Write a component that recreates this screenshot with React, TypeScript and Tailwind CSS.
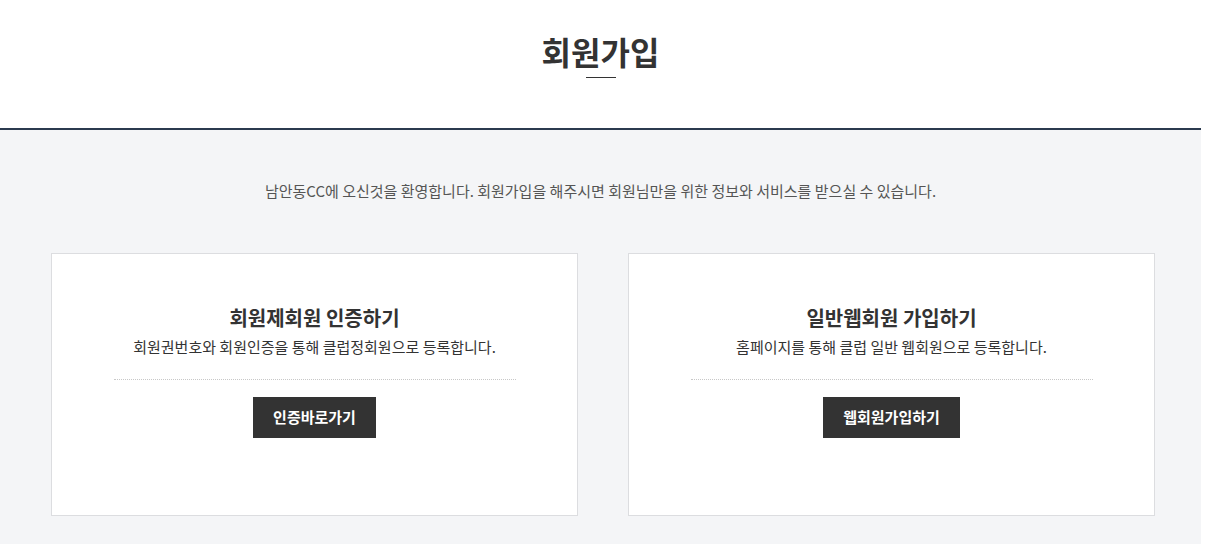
import React from 'react';

const font = { fontFamily: '"Noto Sans CJK KR", "Noto Sans", sans-serif' };

type CardProps = {
  title: string;
  desc: string;
  button: string;
};

const JoinCard: React.FC<CardProps> = ({ title, desc, button }) => {
  return (
    <div className="w-[527px] h-[263px] bg-white border border-[#dcdde0] flex flex-col items-center pt-[51px]">
      <h3 className="text-[20px] leading-[26px] font-bold text-[#333]">{title}</h3>
      <p className="mt-[6px] text-[15px] leading-[20px] text-[#333]">{desc}</p>
      <div className="mt-[22px] w-[402px] border-t border-dotted border-[#c8c8c8]" />
      <a
        href="#"
        className="mt-[17px] h-[41px] px-[20px] flex items-center bg-[#333333] text-white text-[15px] font-bold"
      >
        {button}
      </a>
    </div>
  );
};

export default function App() {
  return (
    <div className="w-[1201px] bg-white" style={font}>
      <header className="h-[130px] border-b-2 border-[#2b3a4f] flex flex-col items-center pt-[31px]">
        <h1 className="text-[32px] leading-[40px] font-bold text-[#333]">회원가입</h1>
        <span className="mt-[6px] w-[30px] h-px bg-[#333]" />
      </header>

      <section className="bg-[#f4f5f7] h-[414px] pt-[51px]">
        <p className="text-center text-[15px] leading-[20px] text-[#555]">
          남안동CC에 오신것을 환영합니다. 회원가입을 해주시면 회원님만을 위한 정보와 서비스를 받으실 수 있습니다.
        </p>
        <div className="mt-[52px] pl-[51px] flex gap-[50px]">
          <JoinCard
            title="회원제회원 인증하기"
            desc="회원권번호와 회원인증을 통해 클럽정회원으로 등록합니다."
            button="인증바로가기"
          />
          <JoinCard
            title="일반웹회원 가입하기"
            desc="홈페이지를 통해 클럽 일반 웹회원으로 등록합니다."
            button="웹회원가입하기"
          />
        </div>
      </section>
    </div>
  );
}
